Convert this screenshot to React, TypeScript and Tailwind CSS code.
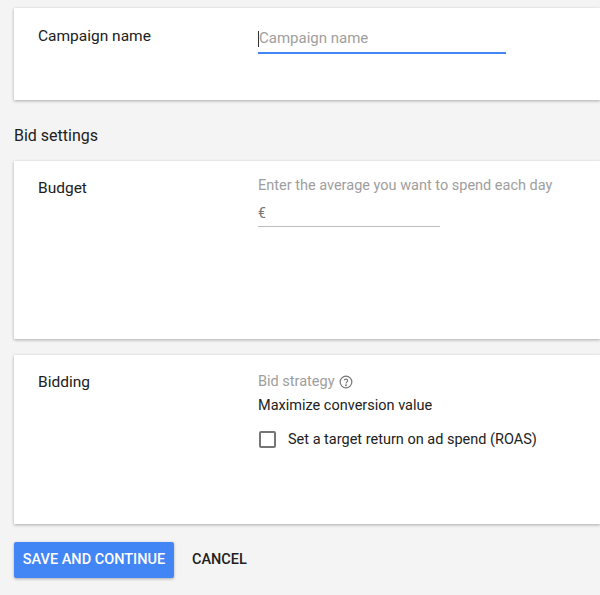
import React from 'react';

const Card: React.FC<{ label: string; className: string; children: React.ReactNode }> = ({ label, className, children }) => (
  <div className={`ml-[14px] bg-white shadow-[0_1px_3px_rgba(0,0,0,0.3)] flex ${className}`}>
    <div className="w-[244px] pl-[24px] text-[15.5px] text-[#212121]">{label}</div>
    <div className="flex-1">{children}</div>
  </div>
);

export default function App() {
  return (
    <div className="w-[600px] h-[595px] overflow-hidden bg-[#f4f4f4] pt-[8px]" style={{ fontFamily: 'Roboto, "Liberation Sans", sans-serif' }}>
      <Card label="Campaign name" className="h-[92px] pt-[17px]">
        <div className="w-[248px] border-b-2 border-[#4285f4] h-[29px] flex items-center">
          <span className="w-px h-[16px] bg-[#333]" />
          <span className="text-[15px] text-[#9e9e9e]">Campaign name</span>
        </div>
      </Card>
      <div className="pl-[14px] pt-[24px] pb-[13px] text-[16px] text-[#212121]">Bid settings</div>
      <Card label="Budget" className="h-[178px] pt-[16px]">
        <div className="text-[14.5px] text-[#9e9e9e] -mt-[2px]">Enter the average you want to spend each day</div>
        <div className="w-[182px] border-b border-[#bdbdbd] h-[30px] pt-[6px] text-[14px] text-[#757575]">€</div>
      </Card>
      <Card label="Bidding" className="h-[169px] mt-[16px] pt-[16px]">
        <div className="flex items-center gap-1 text-[14.5px] text-[#9e9e9e]">
          Bid strategy
          <svg width="14" height="14" viewBox="0 0 24 24" fill="none" stroke="#757575" strokeWidth="2">
            <circle cx="12" cy="12" r="10" />
            <path d="M9.1 9a3 3 0 0 1 5.8 1c0 2-3 2.5-3 4.5" />
            <circle cx="12" cy="17.5" r="0.6" fill="#757575" />
          </svg>
        </div>
        <div className="text-[14.5px] text-[#212121] mt-[2px]">Maximize conversion value</div>
        <div className="flex items-center gap-[12px] mt-[12px] ml-[1px]">
          <span className="w-[17px] h-[17px] border-2 border-[#757575] rounded-[2px]" />
          <span className="text-[14.5px] text-[#212121]">Set a target return on ad spend (ROAS)</span>
        </div>
      </Card>
      <div className="flex items-center mt-[18px] ml-[14px] gap-[18px]">
        <button className="w-[160px] h-[36px] bg-[#4285f4] text-white text-[14.5px] font-medium rounded-[2px] shadow-[0_1px_3px_rgba(0,0,0,0.3)]">SAVE AND CONTINUE</button>
        <button className="text-[14.5px] font-medium text-[#212121]">CANCEL</button>
      </div>
    </div>
  );
}
